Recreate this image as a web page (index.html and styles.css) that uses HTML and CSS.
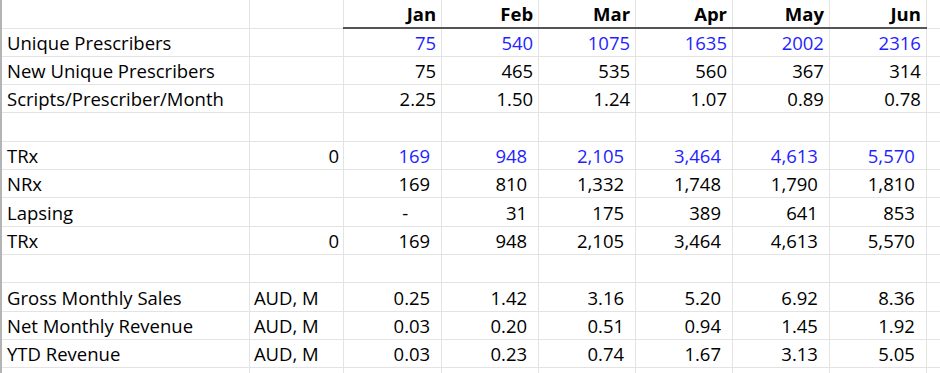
FILE: index.html
```html
<!DOCTYPE html>
<html lang="en">
<head>
    <meta charset="UTF-8">
    <title>Prescriber forecast</title>
    <link rel="stylesheet" href="styles.css">
</head>
<body>
    <table class="sheet">
        <colgroup>
            <col class="col-label">
            <col class="col-unit">
            <col class="col-jan">
            <col class="col-month">
            <col class="col-month">
            <col class="col-month">
            <col class="col-month">
            <col class="col-month">
            <col class="col-rest">
        </colgroup>
        <tr class="head">
            <td></td><td></td>
            <th>Jan</th><th>Feb</th><th>Mar</th><th>Apr</th><th>May</th><th>Jun</th>
            <td class="plain"></td>
        </tr>
        <tr class="input">
            <td class="label">Unique Prescribers</td><td></td>
            <td>75</td><td>540</td><td>1075</td><td>1635</td><td>2002</td><td>2316</td><td></td>
        </tr>
        <tr>
            <td class="label">New Unique Prescribers</td><td></td>
            <td>75</td><td>465</td><td>535</td><td>560</td><td>367</td><td>314</td><td></td>
        </tr>
        <tr>
            <td class="label">Scripts/Prescriber/Month</td><td></td>
            <td>2.25</td><td>1.50</td><td>1.24</td><td>1.07</td><td>0.89</td><td>0.78</td><td></td>
        </tr>
        <tr class="blank"><td></td><td></td><td></td><td></td><td></td><td></td><td></td><td></td><td></td></tr>
        <tr class="input acc">
            <td class="label">TRx</td><td class="zero">0</td>
            <td>169</td><td>948</td><td>2,105</td><td>3,464</td><td>4,613</td><td>5,570</td><td></td>
        </tr>
        <tr class="acc">
            <td class="label">NRx</td><td></td>
            <td>169</td><td>810</td><td>1,332</td><td>1,748</td><td>1,790</td><td>1,810</td><td></td>
        </tr>
        <tr class="acc">
            <td class="label">Lapsing</td><td></td>
            <td class="dash">-</td><td>31</td><td>175</td><td>389</td><td>641</td><td>853</td><td></td>
        </tr>
        <tr class="acc">
            <td class="label">TRx</td><td class="zero">0</td>
            <td>169</td><td>948</td><td>2,105</td><td>3,464</td><td>4,613</td><td>5,570</td><td></td>
        </tr>
        <tr class="blank"><td></td><td></td><td></td><td></td><td></td><td></td><td></td><td></td><td></td></tr>
        <tr class="acc">
            <td class="label">Gross Monthly Sales</td><td class="unit">AUD, M</td>
            <td>0.25</td><td>1.42</td><td>3.16</td><td>5.20</td><td>6.92</td><td>8.36</td><td></td>
        </tr>
        <tr class="acc">
            <td class="label">Net Monthly Revenue</td><td class="unit">AUD, M</td>
            <td>0.03</td><td>0.20</td><td>0.51</td><td>0.94</td><td>1.45</td><td>1.92</td><td></td>
        </tr>
        <tr class="acc">
            <td class="label">YTD Revenue</td><td class="unit">AUD, M</td>
            <td>0.03</td><td>0.23</td><td>0.74</td><td>1.67</td><td>3.13</td><td>5.05</td><td></td>
        </tr>
        <tr class="blank"><td></td><td></td><td></td><td></td><td></td><td></td><td></td><td></td><td></td></tr>
    </table>
</body>
</html>
```

FILE: styles.css
```css
* {
    margin: 0;
    padding: 0;
    box-sizing: border-box;
}

body {
    background: #fff;
    color: #000;
    font-family: "Open Sans", "Liberation Sans", Arial, sans-serif;
    font-size: 18.5px;
    overflow: hidden;
}

.sheet {
    border-collapse: collapse;
    table-layout: fixed;
    width: 942px;
    border-left: 2px solid #b4b4b4;
}

.col-label { width: 248px; }
.col-unit { width: 94px; }
.col-jan { width: 98px; }
.col-month { width: 96.8px; }
.col-rest { width: 15px; }

.sheet td,
.sheet th {
    height: 28.33px;
    border: 1px solid #e3e3e3;
    border-top: none;
    padding: 0 5px 3px 4px;
    text-align: right;
    vertical-align: bottom;
    white-space: nowrap;
    overflow: hidden;
    line-height: 20px;
}

.head td,
.head th {
    height: 28px;
}

.head th {
    font-weight: bold;
    border-bottom: 2px solid #555;
}

.sheet td.label {
    text-align: left;
    padding-left: 5px;
}

.sheet td.unit {
    text-align: left;
    padding-left: 4px;
}

.input td {
    color: #1f1fff;
}

.input td.label,
.input td.zero {
    color: #000;
}

.acc td {
    padding-right: 11px;
}

.acc td.zero {
    padding-right: 4px;
}

.acc td.dash {
    padding-right: 33px;
}
```
